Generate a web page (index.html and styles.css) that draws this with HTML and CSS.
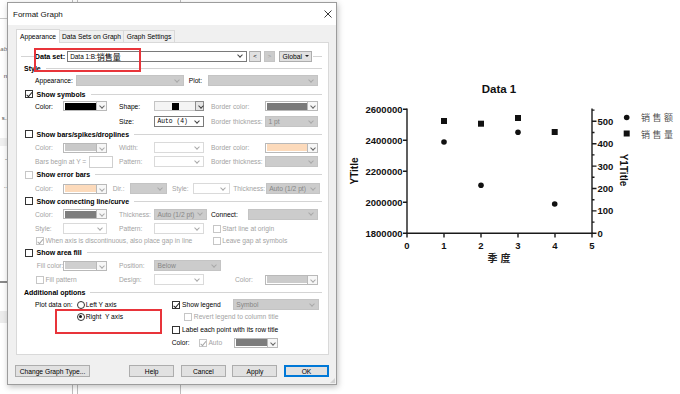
FILE: index.html
```html
<!DOCTYPE html>
<html lang="zh">
<head>
    <meta charset="UTF-8">
    <title>Format Graph</title>
    <link rel="stylesheet" href="styles.css">
</head>
<body>
<div class="desktop">
    <div class="bg-line line-a"></div>
    <div class="bg-line line-b"></div>
    <div class="bg-line line-c"></div>

    <!-- the window lying behind the dialog, only its left edge shows -->
    <div class="bg-win">
        <div class="frag frag-rule"></div>
        <div class="frag frag-ab">ab</div>
        <div class="frag frag-n">n</div>
        <div class="frag frag-s">s..</div>
        <div class="frag frag-band"></div>
        <div class="frag frag-dash">-</div>
        <div class="frag frag-dots">..</div>
        <div class="frag frag-dark"></div>
        <div class="frag frag-block"></div>
    </div>

    <div class="dialog">
        <div class="titlebar">
            <span class="title">Format Graph</span>
            <svg class="close" width="8" height="8" viewBox="0 0 8 8">
                <path d="M0.5 0.5 L7.5 7.5 M7.5 0.5 L0.5 7.5" stroke="#222" stroke-width="0.9" fill="none"/>
            </svg>
        </div>

        <div class="dialog-body">
            <div class="tabs">
                <div class="tab active tab-a">Appearance</div>
                <div class="tab tab-b">Data Sets on Graph</div>
                <div class="tab tab-c">Graph Settings</div>
            </div>

            <div class="panel">
                <!-- data set selector -->
                <div class="row row-dataset">
                    <span class="rule rule-short"></span>
                    <b class="ds-label">Data set:</b>
                    <div class="combo on ds-combo">Data 1:B:<span class="cjk">销售量</span></div>
                    <div class="mini-btn">&lt;</div>
                    <div class="mini-btn off">&gt;</div>
                    <div class="global-btn">Global <span class="tri"></span></div>
                    <span class="rule"></span>
                </div>

                <div class="row head"><b>Style</b><span class="rule"></span></div>

                <div class="row">
                    <span class="lbl w-appear">Appearance:</span>
                    <div class="combo dis w-appcombo"></div>
                    <span class="lbl w-plot">Plot:</span>
                    <div class="combo dis w-plotcombo"></div>
                </div>

                <!-- symbols -->
                <div class="row head cbhead"><span class="cb checked"></span><b>Show symbols</b><span class="rule"></span></div>
                <div class="row">
                    <span class="lbl l1">Color:</span>
                    <div class="swatch c1"><span class="sw black"></span><span class="sw-btn"></span></div>
                    <span class="lbl l2">Shape:</span>
                    <div class="shape c2"><span class="shape-box"><span class="sq"></span></span><span class="shape-btn"></span></div>
                    <span class="lbl l3 off">Border color:</span>
                    <div class="swatch c3"><span class="sw grey"></span><span class="sw-btn"></span></div>
                </div>
                <div class="row">
                    <span class="l1"></span>
                    <span class="c1"></span>
                    <span class="lbl l2">Size:</span>
                    <div class="combo on c2 mono">Auto (4)</div>
                    <span class="lbl l3 off">Border thickness:</span>
                    <div class="combo dis c3">1 pt</div>
                </div>

                <!-- bars -->
                <div class="row head cbhead"><span class="cb"></span><b>Show bars/spikes/droplines</b><span class="rule"></span></div>
                <div class="row">
                    <span class="lbl l1 off">Color:</span>
                    <div class="swatch c1 dim"><span class="sw light"></span><span class="sw-btn"></span></div>
                    <span class="lbl l2 off">Width:</span>
                    <div class="combo blank c2"></div>
                    <span class="lbl l3 off">Border color:</span>
                    <div class="swatch c3"><span class="sw peach"></span><span class="sw-btn"></span></div>
                </div>
                <div class="row">
                    <span class="lbl w-bars off">Bars begin at Y =</span>
                    <span class="input"></span>
                    <span class="lbl l2 tight off">Pattern:</span>
                    <div class="combo blank c2"></div>
                    <span class="lbl l3 off">Border thickness:</span>
                    <div class="combo dis c3"></div>
                </div>

                <!-- error bars -->
                <div class="row head cbhead"><span class="cb dis"></span><b>Show error bars</b><span class="rule"></span></div>
                <div class="row">
                    <span class="lbl l1 off">Color:</span>
                    <div class="swatch c1 dim"><span class="sw peach"></span><span class="sw-btn"></span></div>
                    <span class="lbl w-dir-l off">Dir.:</span>
                    <div class="combo dis w-dir"></div>
                    <span class="lbl w-sty-l off">Style:</span>
                    <div class="combo blank w-sty"></div>
                    <span class="lbl w-thk-l off">Thickness:</span>
                    <div class="combo dis w-thk">Auto (1/2 pt)</div>
                </div>

                <!-- connecting line -->
                <div class="row head cbhead"><span class="cb"></span><b>Show connecting line/curve</b><span class="rule"></span></div>
                <div class="row">
                    <span class="lbl l1 off">Color:</span>
                    <div class="swatch c1 dim"><span class="sw dark"></span><span class="sw-btn"></span></div>
                    <span class="lbl l2 off">Thickness:</span>
                    <div class="combo dis w-thk2">Auto (1/2 pt)</div>
                    <span class="lbl w-conn-l">Connect:</span>
                    <div class="combo dis w-conn"></div>
                </div>
                <div class="row">
                    <span class="lbl l1 off">Style:</span>
                    <div class="combo blank c1"></div>
                    <span class="lbl l2 off">Pattern:</span>
                    <div class="combo blank c2"></div>
                    <span class="cb dis gap-start"></span>
                    <span class="lbl off cb-text">Start line at origin</span>
                </div>
                <div class="row">
                    <div class="chk-wide">
                        <span class="cb dis checked nudge"></span>
                        <span class="lbl off cb-text">When axis is discontinuous, also place gap in line</span>
                    </div>
                    <span class="cb dis"></span>
                    <span class="lbl off cb-text">Leave gap at symbols</span>
                </div>

                <!-- area fill -->
                <div class="row head cbhead"><span class="cb"></span><b>Show area fill</b><span class="rule"></span></div>
                <div class="row">
                    <span class="lbl l1 off indent">Fill color:</span>
                    <div class="swatch c1 dim"><span class="sw light2"></span><span class="sw-btn"></span></div>
                    <span class="lbl l2 off">Position:</span>
                    <div class="combo dis w-pos">Below</div>
                </div>
                <div class="row">
                    <div class="pair">
                        <span class="cb dis nudge"></span>
                        <span class="lbl off cb-text">Fill pattern</span>
                    </div>
                    <span class="lbl l2 off">Design:</span>
                    <div class="combo blank c2"></div>
                    <span class="lbl l3 off indent3">Color:</span>
                    <div class="swatch c3 dim"><span class="sw light3"></span><span class="sw-btn"></span></div>
                </div>

                <!-- additional -->
                <div class="row head"><b>Additional options</b><span class="rule"></span></div>
                <div class="row">
                    <div class="plot-left">
                        <span class="lbl plot-lbl">Plot data on:</span>
                        <span class="rb"></span>
                        <span class="lbl rb-text">Left Y axis</span>
                    </div>
                    <div class="legend-part">
                        <span class="cb checked"></span>
                        <span class="lbl cb-text2">Show legend</span>
                    </div>
                    <div class="combo dis w-sym">Symbol</div>
                </div>
                <div class="row">
                    <div class="plot-left">
                        <span class="plot-lbl"></span>
                        <span class="rb on"></span>
                        <span class="lbl rb-text">Right&nbsp; Y axis</span>
                    </div>
                    <span class="cb dis revert"></span>
                    <span class="lbl off cb-text">Revert legend to column title</span>
                </div>
                <div class="row">
                    <div class="plot-left"></div>
                    <span class="cb"></span>
                    <span class="lbl cb-text2">Label each point with its row title</span>
                </div>
                <div class="row">
                    <div class="plot-left"></div>
                    <span class="lbl w-col">Color:</span>
                    <div class="auto-part">
                        <span class="cb dis checked"></span>
                        <span class="lbl off cb-text2">Auto</span>
                    </div>
                    <div class="swatch c1"><span class="sw dark"></span><span class="sw-btn"></span></div>
                </div>

                <div class="mark mark-a"></div>
                <div class="mark mark-b"></div>
            </div>

            <div class="buttons">
                <div class="btn btn-change">Change Graph Type...</div>
                <div class="btn-group">
                    <div class="btn">Help</div>
                    <div class="btn">Cancel</div>
                    <div class="btn">Apply</div>
                    <div class="btn btn-ok">OK</div>
                </div>
            </div>
            <div class="grip"></div>
        </div>
    </div>

    <svg class="chart" width="340" height="394" viewBox="340 0 340 394">
        <text class="ch-title" x="500" y="93" text-anchor="middle">Data 1</text>

        <g stroke="#1a1a1a" stroke-width="1.4" fill="none">
            <line x1="408" y1="108.6" x2="408" y2="234"/>
            <line x1="407.3" y1="233.3" x2="593.7" y2="233.3"/>
            <line x1="593" y1="108.6" x2="593" y2="234"/>
            <!-- left ticks -->
            <path d="M404 109.3H408 M404 140.3H408 M404 171.3H408 M404 202.3H408 M404 233.3H408"/>
            <!-- bottom ticks -->
            <path d="M408 233.3V237.6 M445 233.3V237.6 M482 233.3V237.6 M519 233.3V237.6 M556 233.3V237.6 M593 233.3V237.6"/>
            <!-- right ticks -->
            <path d="M593 121.3H597.5 M593 143.7H597.5 M593 166.1H597.5 M593 188.5H597.5 M593 210.9H597.5 M593 233.3H597.5"/>
            <path d="M593 110.1H595.5 M593 132.5H595.5 M593 154.9H595.5 M593 177.3H595.5 M593 199.7H595.5 M593 222.1H595.5"/>
        </g>

        <g class="ch-num" text-anchor="end">
            <text x="403.5" y="112.7">2600000</text>
            <text x="403.5" y="143.7">2400000</text>
            <text x="403.5" y="174.7">2200000</text>
            <text x="403.5" y="205.7">2000000</text>
            <text x="403.5" y="236.7">1800000</text>
        </g>
        <g class="ch-num" text-anchor="middle">
            <text x="408" y="248.6">0</text>
            <text x="445" y="248.6">1</text>
            <text x="482" y="248.6">2</text>
            <text x="519" y="248.6">3</text>
            <text x="556" y="248.6">4</text>
            <text x="593" y="248.6">5</text>
        </g>
        <g class="ch-num">
            <text x="598.5" y="124.7">500</text>
            <text x="598.5" y="147.1">400</text>
            <text x="598.5" y="169.5">300</text>
            <text x="598.5" y="191.9">200</text>
            <text x="598.5" y="214.3">100</text>
            <text x="598.5" y="236.7">0</text>
        </g>

        <text class="ch-axis" transform="translate(359.3 171) rotate(-90)" text-anchor="middle">YTitle</text>
        <text class="ch-axis" transform="translate(621 170) rotate(90)" text-anchor="middle">Y1Title</text>
        <text class="ch-xtitle" x="501.5" y="262" text-anchor="middle">季度</text>

        <g fill="#111">
            <circle cx="445" cy="142" r="2.8"/>
            <circle cx="482" cy="185.3" r="2.8"/>
            <circle cx="519" cy="132.3" r="2.8"/>
            <circle cx="555.7" cy="204" r="2.8"/>
            <rect x="442" y="118" width="6" height="6"/>
            <rect x="479" y="120.7" width="6" height="6"/>
            <rect x="516" y="115" width="6" height="6"/>
            <rect x="552.7" y="129" width="6" height="6"/>

            <circle cx="627.7" cy="117.5" r="2.8"/>
            <rect x="624.7" y="130.5" width="6" height="6"/>
        </g>
        <text class="ch-legend" x="642" y="121">销售额</text>
        <text class="ch-legend" x="642" y="137.5">销售量</text>
    </svg>
</div>
</body>
</html>
```

FILE: styles.css
```css
* {
    box-sizing: border-box;
}

body {
    margin: 0;
    width: 680px;
    height: 394px;
    overflow: hidden;
    background: #fff;
    font-family: "Liberation Sans", Arial, sans-serif;
    font-size: 6.7px;
    color: #000;
}

.desktop {
    position: relative;
    display: flex;
    align-items: flex-start;
    height: 394px;
}

/* edges of the windows lying under the dialog */
.bg-line {
    position: absolute;
    top: 0;
    bottom: 0;
    width: 1px;
    background: #bdbdbd;
}

.line-a { left: 72px; }
.line-b { left: 77px; }
.line-c { left: 180px; }

.bg-win {
    position: absolute;
    left: 0;
    top: 0;
    width: 8px;
    height: 394px;
    font-size: 6px;
    color: #444;
}

.frag {
    position: absolute;
    right: 1px;
    white-space: nowrap;
}

.frag-rule {
    top: 18px;
    left: 0;
    height: 1px;
    background: #c8c8c8;
}

.frag-ab { top: 46px; font-style: italic; color: #666; }
.frag-n { top: 73px; }
.frag-s { top: 115px; right: 0; }
.frag-dash { top: 156px; }
.frag-dots { top: 183px; }

.frag-band {
    top: 138px;
    left: 0;
    height: 8px;
    background: #f0f0f0;
}

.frag-dark {
    top: 281px;
    left: 0;
    height: 2px;
    background: #8a8a8a;
}

.frag-block {
    top: 311px;
    left: 0;
    height: 12px;
    background: #ececec;
}

.dialog {
    position: relative;
    width: 330px;
    height: 383px;
    margin: 2px 0 0 7px;
    border: 1px solid #9c9c9c;
    background: #f0f0f0;
    box-shadow: 1px 2px 6px rgba(0, 0, 0, 0.25);
    display: flex;
    flex-direction: column;
}

.titlebar {
    height: 22px;
    background: #fff;
    display: flex;
    align-items: center;
    justify-content: space-between;
    padding: 0 4px 0 5px;
}

.title {
    font-size: 8px;
    color: #111;
}

.close {
    display: block;
}

.dialog-body {
    position: relative;
    flex: 1;
    padding: 5px 7px 0 8px;
}

.tabs {
    display: flex;
    align-items: flex-end;
    height: 12px;
    position: relative;
    z-index: 1;
}

.tab {
    height: 12px;
    display: flex;
    align-items: center;
    justify-content: center;
    border: 1px solid #d9d9d9;
    border-bottom: none;
    border-left: none;
    background: #f0f0f0;
}

.tab.active {
    height: 14px;
    margin-bottom: -1px;
    background: #fff;
    border-left: 1px solid #d9d9d9;
}

.tab-a { width: 44px; }
.tab-b { width: 64px; }
.tab-c { width: 51px; }

.panel {
    position: relative;
    height: 313px;
    border: 1px solid #d9d9d9;
    background: #fff;
    padding-top: 7px;
    display: grid;
    grid-template-rows: 12.5px 12px 13.5px 12px 15.5px 12.5px 13.5px 14px 13px 14px 12.5px 13px 14.5px 12px 12px 13px 14px 13px 12px 12px 13px 13px 12px;
    align-content: start;
}

.row {
    height: 12px;
    align-self: start;
    display: flex;
    align-items: center;
    padding-left: 18px;
    white-space: nowrap;
}

.head {
    padding-left: 7px;
}

.head b {
    font-size: 7px;
}

.cbhead {
    padding-left: 8px;
}

.cbhead b {
    margin-left: 3.5px;
}

.rule {
    flex: 1;
    height: 1px;
    background: #d4d4d4;
    margin: 0 6px 0 5px;
}

.row-dataset {
    padding-left: 3.7px;
}

.rule-short {
    flex: none;
    width: 13px;
    margin: 0 1px 0 0;
}

.ds-label {
    font-size: 7.2px;
    width: 32px;
}

.ds-combo {
    width: 180px;
    height: 13px;
    font-size: 6.4px;
    padding-left: 3px;
}

.cjk {
    font-family: "Noto Sans CJK SC", sans-serif;
    font-size: 8px;
}

.mini-btn {
    width: 11.5px;
    height: 11px;
    margin-left: 2.6px;
    border: 1px solid #adadad;
    background: #e1e1e1;
    display: flex;
    align-items: center;
    justify-content: center;
    font-size: 6px;
}

.mini-btn.off {
    margin-left: 3px;
    background: #cccccc;
    border-color: #c4c4c4;
    color: #9a9a9a;
}

.global-btn {
    width: 33.5px;
    height: 11px;
    margin-left: 3.3px;
    border: 1px solid #adadad;
    background: #e1e1e1;
    display: flex;
    align-items: center;
    padding-left: 3px;
    gap: 3px;
}

.tri {
    width: 0;
    height: 0;
    border-left: 2px solid transparent;
    border-right: 2px solid transparent;
    border-top: 2.5px solid #222;
}

.global-btn + .rule {
    margin-left: 1px;
}

/* labels */
.lbl {
    color: #000;
}

.lbl.off {
    color: #a3a3a3;
}

.l1 { width: 28px; flex: none; }
.c1 { width: 44px; flex: none; }
.l2 { width: 35px; margin-left: 12px; flex: none; }
.l2.tight { margin-left: 5.7px; }
.c2 { width: 50px; flex: none; }
.l3 { width: 54px; margin-left: 7px; flex: none; }
.c3 { width: 53px; flex: none; }

.indent { padding-left: 1.7px; }
.indent3 { padding-left: 24px; }

.w-appear { width: 41px; }
.w-appcombo { width: 108px; }
.w-plot { width: 19.5px; margin-left: 4.7px; }
.w-plotcombo { width: 110px; }

.w-bars { width: 54px; }

.input {
    width: 24.3px;
    height: 12px;
    border: 1px solid #cfcfcf;
    background: #fff;
}

.w-dir-l { width: 17.3px; margin-left: 5.7px; }
.w-dir { width: 36.7px; }
.w-sty-l { width: 21.3px; margin-left: 5.3px; }
.w-sty { width: 36.7px; }
.w-thk-l { width: 32.4px; margin-left: 3.3px; }
.w-thk { width: 54.3px; }

.w-thk2 { width: 52.7px; }
.w-conn-l { width: 37.3px; margin-left: 4.3px; }
.w-conn { width: 70px; }

.w-pos { width: 67px; }

/* combo boxes */
.combo {
    position: relative;
    height: 11px;
    border: 1px solid #c4c4c4;
    display: flex;
    align-items: center;
    padding-left: 2.5px;
    color: #858585;
}

.combo::after {
    content: "";
    position: absolute;
    right: 4px;
    top: 50%;
    width: 3px;
    height: 3px;
    border-right: 1px solid #a9a9a9;
    border-bottom: 1px solid #a9a9a9;
    transform: translateY(-75%) rotate(45deg);
}

.combo.dis {
    background: #cccccc;
    border-color: #c4c4c4;
}

.combo.blank {
    background: #fff;
    border-color: #dadada;
}

.combo.on {
    background: #fff;
    border-color: #7a7a7a;
    color: #000;
}

.combo.on::after {
    border-color: #444;
}

.mono {
    font-family: "Liberation Mono", monospace;
    font-size: 6.3px;
}

/* colour swatches */
.swatch {
    height: 10px;
    display: flex;
    border: 1px solid #b9b9b9;
    background: #fff;
}

.sw {
    flex: 1;
    margin: 0.5px;
}

.sw-btn {
    position: relative;
    width: 10px;
    border-left: 1px solid #b9b9b9;
    background: #f7f7f7;
}

.sw-btn::after {
    content: "";
    position: absolute;
    left: 3px;
    top: 2px;
    width: 3px;
    height: 3px;
    border-right: 1px solid #666;
    border-bottom: 1px solid #666;
    transform: rotate(45deg);
}

.swatch.dim .sw-btn::after {
    border-color: #aaa;
}

.black { background: #000; }
.grey { background: #7a7a7a; }
.light { background: #c9c9c9; }
.light2 { background: #cfcfcf; }
.light3 { background: #cbcbcb; }
.peach { background: #fcdabb; }
.dark { background: #7d7d7d; }

.shape {
    height: 10px;
    display: flex;
    border: 1px solid #c4c4c4;
    background: #f4f4f4;
}

.shape-box {
    flex: 1;
    display: flex;
    align-items: center;
    justify-content: center;
}

.sq {
    width: 7px;
    height: 7px;
    background: #000;
}

.shape-btn {
    position: relative;
    width: 9px;
    border: 1px solid #8c8c8c;
    margin: -1px -1px -1px 0;
    background: #e5e5e5;
}

.shape-btn::after {
    content: "";
    position: absolute;
    left: 2.5px;
    top: 1.5px;
    width: 3px;
    height: 3px;
    border-right: 1px solid #444;
    border-bottom: 1px solid #444;
    transform: rotate(45deg);
}

/* check boxes and radios */
.cb {
    position: relative;
    flex: none;
    width: 8px;
    height: 8px;
    border: 1px solid #333;
    background: #fff;
}

.cb.dis {
    border-color: #c6c6c6;
}

.cb.checked::after {
    content: "";
    position: absolute;
    left: 2px;
    top: 0;
    width: 2.2px;
    height: 4.5px;
    border-right: 1px solid #222;
    border-bottom: 1px solid #222;
    transform: rotate(40deg);
}

.cb.dis.checked::after {
    border-color: #a6a6a6;
}

.cb-text {
    margin-left: 1.5px;
}

.cb-text2 {
    margin-left: 1.7px;
}

.nudge {
    margin-left: 1px;
}

.gap-start {
    margin-left: 8.7px;
}

.chk-wide {
    width: 177.7px;
    display: flex;
    align-items: center;
}

.pair {
    width: 72px;
    display: flex;
    align-items: center;
}

.rb {
    position: relative;
    flex: none;
    width: 8px;
    height: 8px;
    border: 1px solid #333;
    border-radius: 50%;
    background: #fff;
}

.rb.on::after {
    content: "";
    position: absolute;
    left: 1.5px;
    top: 1.5px;
    width: 3px;
    height: 3px;
    border-radius: 50%;
    background: #111;
}

.rb-text {
    margin-left: 1px;
}

.plot-left {
    width: 137.3px;
    flex: none;
    display: flex;
    align-items: center;
}

.plot-lbl {
    width: 41.7px;
}

.legend-part {
    width: 60.4px;
    display: flex;
    align-items: center;
}

.w-sym {
    width: 86.6px;
}

.revert {
    margin-left: 12px;
}

.w-col {
    width: 27px;
    margin-left: -0.6px;
}

.auto-part {
    width: 35.6px;
    display: flex;
    align-items: center;
}

/* red annotation boxes drawn over the dialog */
.mark {
    position: absolute;
    z-index: 2;
    border: 2px solid #e8343a;
}

.mark-a {
    left: 16.5px;
    top: 5.2px;
    width: 107px;
    height: 24px;
}

.mark-b {
    left: 38px;
    top: 266px;
    width: 107px;
    height: 24.5px;
}

/* bottom buttons */
.buttons {
    display: flex;
    height: 12px;
    margin-top: 10px;
}

.btn {
    width: 45px;
    height: 12px;
    border: 1px solid #adadad;
    background: #e1e1e1;
    display: flex;
    align-items: center;
    justify-content: center;
}

.btn-change {
    width: 75px;
    margin-left: -1px;
}

.btn-group {
    margin-left: auto;
    display: flex;
    gap: 6.6px;
}

.btn-ok {
    border-color: #0078d7;
    box-shadow: inset 0 0 0 1px #0078d7;
}

.grip {
    position: absolute;
    right: 1px;
    bottom: 1px;
    width: 5px;
    height: 5px;
    background: radial-gradient(circle, #b0b0b0 0.6px, transparent 0.8px) 0 0 / 2px 2px;
    clip-path: polygon(100% 0, 100% 100%, 0 100%);
}

/* chart */
.chart {
    display: block;
    margin-left: 2px;
    flex: none;
}

.ch-title {
    font-family: "Liberation Sans", Arial, sans-serif;
    font-weight: bold;
    font-size: 11.5px;
    fill: #111;
}

.ch-num {
    font-family: "Liberation Sans", Arial, sans-serif;
    font-weight: bold;
    font-size: 9.5px;
    fill: #111;
}

.ch-axis {
    font-family: "Liberation Sans", Arial, sans-serif;
    font-weight: bold;
    font-size: 10px;
    fill: #111;
}

.ch-xtitle {
    font-family: "Noto Sans CJK SC", sans-serif;
    font-weight: bold;
    font-size: 10px;
    letter-spacing: 3px;
    fill: #222;
}

.ch-legend {
    font-family: "Noto Sans CJK SC", sans-serif;
    font-size: 9px;
    letter-spacing: 2.5px;
    fill: #555;
}
```
